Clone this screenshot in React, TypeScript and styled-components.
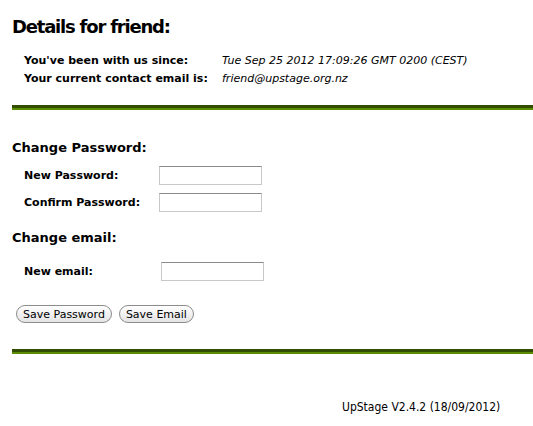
import React from 'react';
import styled, { createGlobalStyle } from 'styled-components';

const GlobalStyle = createGlobalStyle`
    html, body {
        margin: 0;
        padding: 0;
        background: #fff;
    }
    body {
        font-family: "DejaVu Sans", Verdana, sans-serif;
        color: #000;
    }
`;

function App() {
    return (
        <Page>
            <GlobalStyle />
            <Title>Details for friend:</Title>
            <DetailsGrid>
                <Label>You've been with us since:</Label>
                <Value>Tue Sep 25 2012 17:09:26 GMT 0200 (CEST)</Value>
                <Label>Your current contact email is:</Label>
                <Value>friend@upstage.org.nz</Value>
            </DetailsGrid>
            <Rule gap={19} />
            <Section>
                <SubTitle>Change Password:</SubTitle>
                <FormGrid labelWidth={135} top={10} bottom={18}>
                    <FieldLabel>New Password:</FieldLabel>
                    <TextInput type="password" />
                    <FieldLabel>Confirm Password:</FieldLabel>
                    <TextInput type="password" />
                </FormGrid>
                <SubTitle>Change email:</SubTitle>
                <FormGrid labelWidth={137} top={16} bottom={0}>
                    <FieldLabel>New email:</FieldLabel>
                    <TextInput type="text" />
                </FormGrid>
                <Buttons>
                    <PillButton>Save Password</PillButton>
                    <PillButton>Save Email</PillButton>
                </Buttons>
            </Section>
            <Rule gap={26} />
            <Footer>UpStage V2.4.2 (18/09/2012)</Footer>
        </Page>
    );
}

const Page = styled.div`
    padding: 17px 0 0 12px;
    width: 521px;
`;

const Title = styled.h1`
    margin: 0;
    font-size: 18px;
    font-weight: bold;
    line-height: 20px;
    letter-spacing: -1.2px;
`;

const DetailsGrid = styled.div`
    display: grid;
    grid-template-columns: 198px 1fr;
    row-gap: 4px;
    margin: 17px 0 0 12px;
    font-size: 11px;
    line-height: 14px;
`;

const Label = styled.div`
    font-weight: bold;
`;

const Value = styled.div`
    font-style: italic;
`;

const Rule = styled.div<{ gap: number }>`
    margin-top: ${(p) => p.gap}px;
    height: 2px;
    border-top: 3px solid #334d00;
    background: #5c8c00;
`;

const Section = styled.div`
    padding-top: 30px;
`;

const SubTitle = styled.h2`
    margin: 0;
    font-size: 13px;
    font-weight: bold;
    line-height: 16px;
`;

const FormGrid = styled.div<{ labelWidth: number; top: number; bottom: number }>`
    display: grid;
    grid-template-columns: ${(p) => p.labelWidth}px 103px;
    align-items: center;
    row-gap: 8px;
    margin: ${(p) => p.top}px 0 ${(p) => p.bottom}px 12px;
`;

const FieldLabel = styled.label`
    font-size: 11px;
    font-weight: bold;
`;

const TextInput = styled.input`
    box-sizing: border-box;
    width: 103px;
    height: 19px;
    margin: 0;
    border: 1px solid #c8c8c8;
    border-top-color: #8a8a8a;
    background: #fff;
`;

const Buttons = styled.div`
    display: flex;
    gap: 7px;
    margin: 24px 0 0 4px;
`;

const PillButton = styled.button`
    height: 18px;
    padding: 0 6px;
    border: 1px solid #8c8c8c;
    border-radius: 9px;
    background: linear-gradient(#ffffff, #e4e4e4);
    font-family: "DejaVu Sans", Verdana, sans-serif;
    font-size: 11px;
    color: #000;
`;

const Footer = styled.div`
    margin: 46px 0 0 330px;
    font-family: "DejaVu Sans Condensed", "DejaVu Sans", sans-serif;
    font-size: 12px;
`;

export default App;
